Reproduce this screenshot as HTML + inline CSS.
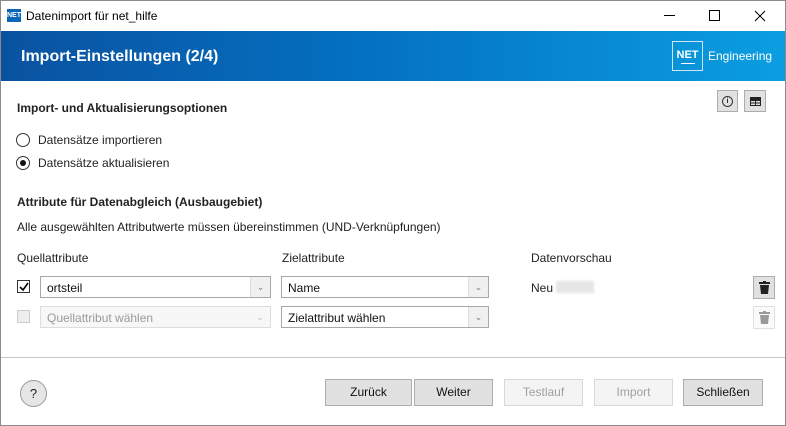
<!DOCTYPE html>
<html><head><meta charset="utf-8"><style>
*{margin:0;padding:0;box-sizing:border-box}
body{width:786px;height:426px;overflow:hidden;background:#fff;font-family:"Liberation Sans",sans-serif;font-size:12px;color:#222;position:relative}
.a{position:absolute;white-space:nowrap}
.win{position:absolute;left:0;top:0;width:786px;height:426px;border:1px solid #8a8a8a}
.hdr{position:absolute;left:1px;top:31px;width:784px;height:50px;background:linear-gradient(90deg,#0a52a0 0%,#0470c0 45%,#0a9ee0 100%)}
.combo{position:absolute;height:22px;border:1px solid #a8a8a8;background:#fff;font-size:12px;padding:4px 6px;color:#111}
.combo .dd{position:absolute;right:0;top:0;width:20px;height:20px;background:#f0f0f0;border-left:1px solid #ddd;color:#777;font-size:9px;text-align:center;line-height:20px}
.btn{position:absolute;top:379px;height:27px;border:1px solid #adadad;background:#e1e1e1;text-align:center;line-height:25px;font-size:12px;color:#111}
.btn.dis{background:#f4f4f4;border-color:#d8d8d8;color:#a0a0a0}
</style></head><body>
<div class="win"></div>
<div class="a" style="left:7px;top:9px;width:14px;height:13px;background:#0a66b8;color:#fff;font-size:7px;font-weight:bold;line-height:13px;text-align:center">NET</div>
<div class="a" style="left:26px;top:9px;font-size:12px;color:#000">Datenimport für net_hilfe</div>
<div class="a" style="left:664px;top:15px;width:11px;height:1px;background:#000"></div>
<div class="a" style="left:709px;top:10px;width:11px;height:11px;border:1px solid #000"></div>
<svg class="a" style="left:754px;top:10px" width="12" height="12"><path d="M1 1L11 11M11 1L1 11" stroke="#000" stroke-width="1.1"/></svg>
<div class="hdr"></div>
<div class="a" style="left:21px;top:48px;font-size:16px;font-weight:bold;color:#fff">Import-Einstellungen (2/4)</div>
<div class="a" style="left:672px;top:41px;width:31px;height:30px;border:1px solid #cfe4f6;color:#fff;font-weight:bold;font-size:11px;text-align:center;line-height:26px">NET<div style="position:absolute;left:8px;top:21px;width:14px;height:1px;background:#fff"></div></div>
<div class="a" style="left:708px;top:49px;color:#fff;font-size:12px">Engineering</div>
<div class="a" style="left:17px;top:101px;font-weight:bold">Import- und Aktualisierungsoptionen</div>
<div class="a" style="left:717px;top:90px;width:21px;height:22px;border:1px solid #adadad;background:#e1e1e1"><div style="position:absolute;left:4px;top:5px;width:11px;height:11px;border:1px solid #333;border-radius:50%;font-size:7px;text-align:center;line-height:9px;font-weight:bold">i</div></div>
<div class="a" style="left:744px;top:90px;width:22px;height:22px;border:1px solid #adadad;background:#e1e1e1"><svg style="position:absolute;left:5px;top:6px" width="11" height="9"><rect x="0.5" y="0.5" width="10" height="8" fill="none" stroke="#222"/><path d="M0 3.5H11M0 6H11M5.5 3V9" stroke="#222"/><rect x="0" y="0" width="11" height="3" fill="#222"/></svg></div>
<div class="a" style="left:16px;top:133px;width:14px;height:14px;border:1px solid #333;border-radius:50%"></div>
<div class="a" style="left:38px;top:133px">Datensätze importieren</div>
<div class="a" style="left:16px;top:156px;width:14px;height:14px;border:1px solid #333;border-radius:50%"><div style="position:absolute;left:3px;top:3px;width:6px;height:6px;background:#111;border-radius:50%"></div></div>
<div class="a" style="left:38px;top:156px">Datensätze aktualisieren</div>
<div class="a" style="left:17px;top:195px;font-weight:bold">Attribute für Datenabgleich (Ausbaugebiet)</div>
<div class="a" style="left:17px;top:220px">Alle ausgewählten Attributwerte müssen übereinstimmen (UND-Verknüpfungen)</div>
<div class="a" style="left:17px;top:251px">Quellattribute</div>
<div class="a" style="left:282px;top:251px">Zielattribute</div>
<div class="a" style="left:531px;top:251px">Datenvorschau</div>
<div class="a" style="left:17px;top:280px;width:13px;height:13px;border:1px solid #333"><svg style="position:absolute;left:1px;top:1px" width="10" height="10"><path d="M1 5L4 8L9 1" stroke="#000" stroke-width="1.6" fill="none"/></svg></div>
<div class="combo" style="left:40px;top:276px;width:231px">ortsteil<div class="dd">&#8964;</div></div>
<div class="combo" style="left:281px;top:276px;width:208px">Name<div class="dd">&#8964;</div></div>
<div class="a" style="left:531px;top:281px">Neu</div>
<div class="a" style="left:556px;top:281px;width:38px;height:12px;background:#e6e6e6;filter:blur(1px)"></div>
<div class="a" style="left:753px;top:276px;width:22px;height:23px;border:1px solid #adadad;background:#e1e1e1"><svg style="position:absolute;left:5px;top:4px" width="11" height="13"><rect x="0" y="1" width="11" height="2" fill="#222"/><rect x="4" y="0" width="3" height="2" fill="#222"/><path d="M1 4H10L9 13H2Z" fill="#222"/></svg></div>
<div class="a" style="left:17px;top:310px;width:13px;height:13px;border:1px solid #ccc;background:#eee"></div>
<div class="combo" style="left:40px;top:306px;width:231px;border-color:#ddd;background:#f7f7f7;color:#9a9a9a">Quellattribut wählen<div class="dd" style="background:#f7f7f7;border:none;color:#bbb">&#8964;</div></div>
<div class="combo" style="left:281px;top:306px;width:208px">Zielattribut wählen<div class="dd">&#8964;</div></div>
<div class="a" style="left:753px;top:306px;width:22px;height:23px;border:1px solid #e0e0e0;background:#fafafa"><svg style="position:absolute;left:5px;top:4px" width="11" height="13"><rect x="0" y="1" width="11" height="2" fill="#999"/><rect x="4" y="0" width="3" height="2" fill="#999"/><path d="M1 4H10L9 13H2Z" fill="#999"/></svg></div>
<div class="a" style="left:1px;top:357px;width:784px;height:1px;background:#c8c8c8"></div>
<div class="a" style="left:20px;top:380px;width:27px;height:27px;border:1px solid #999;border-radius:50%;background:#e6e6e6;text-align:center;line-height:25px;font-size:13px">?</div>
<div class="btn" style="left:325px;width:87px">Zurück</div>
<div class="btn" style="left:414px;width:79px">Weiter</div>
<div class="btn dis" style="left:504px;width:79px">Testlauf</div>
<div class="btn dis" style="left:594px;width:79px">Import</div>
<div class="btn" style="left:683px;width:80px">Schließen</div>
</body></html>
